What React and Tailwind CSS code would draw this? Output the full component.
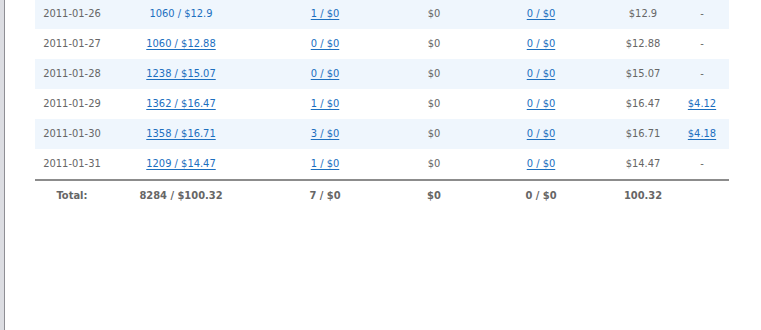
import React from 'react';

const rows = [
    { date: '2011-01-26', clicks: '1060 / $12.9', plain: true, leads: '1 / $0', fees: '$0', refunds: '0 / $0', total: '$12.9', bonus: null },
    { date: '2011-01-27', clicks: '1060 / $12.88', leads: '0 / $0', fees: '$0', refunds: '0 / $0', total: '$12.88', bonus: null },
    { date: '2011-01-28', clicks: '1238 / $15.07', leads: '0 / $0', fees: '$0', refunds: '0 / $0', total: '$15.07', bonus: null },
    { date: '2011-01-29', clicks: '1362 / $16.47', leads: '1 / $0', fees: '$0', refunds: '0 / $0', total: '$16.47', bonus: '$4.12' },
    { date: '2011-01-30', clicks: '1358 / $16.71', leads: '3 / $0', fees: '$0', refunds: '0 / $0', total: '$16.71', bonus: '$4.18' },
    { date: '2011-01-31', clicks: '1209 / $14.47', leads: '1 / $0', fees: '$0', refunds: '0 / $0', total: '$14.47', bonus: null },
];

const cols = 'grid grid-cols-[74px_144px_144px_74px_140px_64px_54px] items-center text-center';

const Link = ({ children, plain }) => (
    <a href="#" className={plain ? 'text-[#1c6fbf] no-underline' : 'text-[#1c6fbf] underline underline-offset-2'}>
        {children}
    </a>
);

export default function App() {
    return (
        <div className="flex h-[330px] w-[761px] overflow-hidden bg-white text-[11px] text-[#666] font-['DejaVu_Sans_Condensed','Liberation_Sans',sans-serif]">
            {/* left frame edge */}
            <div className="w-[4px] bg-[#dcdde2]" />
            <div className="w-px bg-[#8e8e94]" />

            <div className="ml-[30px] -mt-px w-[694px]">
                {rows.map((r, i) => (
                    <div key={r.date} className={`${cols} h-[30px] ${i % 2 === 0 ? 'bg-[#eff6fd]' : 'bg-white'}`}>
                        <span>{r.date}</span>
                        <span><Link plain={r.plain}>{r.clicks}</Link></span>
                        <span><Link>{r.leads}</Link></span>
                        <span>{r.fees}</span>
                        <span><Link>{r.refunds}</Link></span>
                        <span>{r.total}</span>
                        <span>{r.bonus ? <Link>{r.bonus}</Link> : '-'}</span>
                    </div>
                ))}

                {/* totals */}
                <div className={`${cols} h-[32px] border-t-2 border-[#8c8c8c] font-bold`}>
                    <span>Total:</span>
                    <span>8284 / $100.32</span>
                    <span>7 / $0</span>
                    <span>$0</span>
                    <span>0 / $0</span>
                    <span>100.32</span>
                    <span></span>
                </div>
            </div>
        </div>
    );
}
